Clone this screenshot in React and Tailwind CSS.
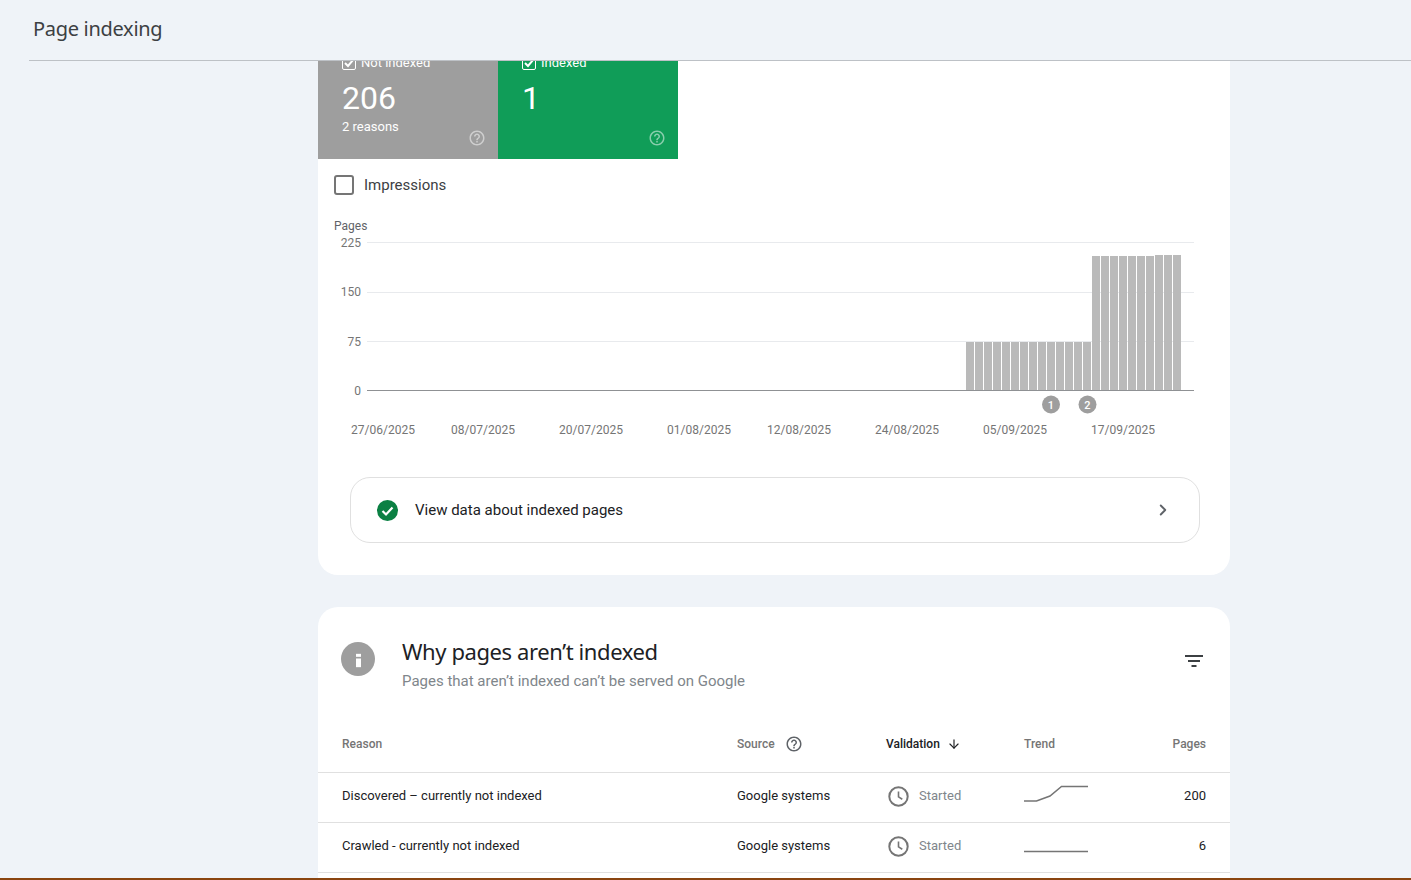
import { ChevronRight, ArrowDown } from 'lucide-react';

const yLabels = [
  { y: 243, line: 242.5, label: '225' },
  { y: 292, line: 292.5, label: '150' },
  { y: 342, line: 341.5, label: '75' },
  { y: 391, line: 390.5, label: '0' },
];

const xLabels = [
  { x: 383, label: '27/06/2025' },
  { x: 483, label: '08/07/2025' },
  { x: 591, label: '20/07/2025' },
  { x: 699, label: '01/08/2025' },
  { x: 799, label: '12/08/2025' },
  { x: 907, label: '24/08/2025' },
  { x: 1015, label: '05/09/2025' },
  { x: 1123, label: '17/09/2025' },
];

const bars = [
  ...Array(14).fill(342),
  ...Array(7).fill(256),
  ...Array(3).fill(255),
];

const rows = [
  { reason: 'Discovered – currently not indexed', pages: '200', trend: '0,26 12.5,26 26,21 37.5,11.5 64,11.5' },
  { reason: 'Crawled - currently not indexed', pages: '6', trend: '0,26.5 64,26.5' },
];

function HelpIcon({ className }) {
  return (
    <svg viewBox="0 0 24 24" className={className} fill="currentColor">
      <path d="M11 18h2v-2h-2v2zm1-16C6.48 2 2 6.48 2 12s4.48 10 10 10 10-4.48 10-10S17.52 2 12 2zm0 18c-4.41 0-8-3.59-8-8s3.59-8 8-8 8 3.59 8 8-3.59 8-8 8zm0-14c-2.21 0-4 1.79-4 4h2c0-1.1.9-2 2-2s2 .9 2 2c0 2-3 1.75-3 5h2c0-2.25 3-2.5 3-5 0-2.21-1.79-4-4-4z" />
    </svg>
  );
}

function ClockIcon() {
  return (
    <svg viewBox="0 0 21 21" className="w-[21px] h-[21px] text-[#757575]" fill="none" stroke="currentColor">
      <circle cx="10.5" cy="10.5" r="9.2" strokeWidth="2" />
      <path d="M10.5 5.5v5.4l3.8 2.4" strokeWidth="1.6" />
    </svg>
  );
}

function Tile({ label, value, sub, color }) {
  return (
    <div className={`w-[180px] h-[113px] relative pl-6 text-white ${color}`}>
      <div className="flex items-center gap-[5px] pt-[9px] h-[24px] text-[13px] leading-4">
        <svg viewBox="0 0 14 14" className="w-[14px] h-[14px]" fill="none" stroke="currentColor">
          <rect x="0.5" y="0.5" width="13" height="13" rx="1.5" />
          <path d="M3 7l3 3 5-6" strokeWidth="2" />
        </svg>
        <span>{label}</span>
      </div>
      <div className="text-[32px] leading-10 mt-2">{value}</div>
      <div className="text-[13px] leading-4 mt-[1px]">{sub}</div>
      <HelpIcon className="absolute right-[12px] bottom-[12px] w-[18px] h-[18px] opacity-50" />
    </div>
  );
}

function Chart() {
  return (
    <svg viewBox="318 210 912 240" className="block w-[912px] h-[240px] mt-[15px]">
      {yLabels.map((t) => (
        <g key={t.label}>
          <line
            x1="367"
            x2="1194"
            y1={t.line}
            y2={t.line}
            stroke={t.label === '0' ? '#8f9194' : '#e8eaed'}
          />
          <text x="361" y={t.y + 4} textAnchor="end" fontSize="12" fill="#757575">{t.label}</text>
        </g>
      ))}
      <text x="334" y="230" fontSize="12" fill="#5f6368">Pages</text>
      {bars.map((top, i) => (
        <rect key={i} x={Math.round(965.5 + i * 9.03)} y={top} width="8" height={390 - top} fill="#bababa" />
      ))}
      <circle cx="1051" cy="404.5" r="9" fill="#9e9e9e" />
      <text x="1051" y="408.5" textAnchor="middle" fontSize="11" fontWeight="500" fill="#fff">1</text>
      <circle cx="1087.5" cy="404.5" r="9" fill="#9e9e9e" />
      <text x="1087.5" y="408.5" textAnchor="middle" fontSize="11" fontWeight="500" fill="#fff">2</text>
      {xLabels.map((t) => (
        <text key={t.label} x={t.x} y="434" textAnchor="middle" fontSize="12" fill="#757575">{t.label}</text>
      ))}
    </svg>
  );
}

export default function App() {
  return (
    <div className="h-[880px] flex flex-col overflow-hidden bg-[#eff3f8] border-b-2 border-[#8a4510] font-['Roboto',sans-serif]">
      <div className="h-[61px] shrink-0 ml-[29px] pl-1 border-b border-[#bdc1c6] flex items-center">
        <h1 className="text-[20px] tracking-[-0.3px] font-['Noto_Sans',sans-serif] text-[#3c4043] pb-[3px]">Page indexing</h1>
      </div>

      <div className="flex-1 overflow-hidden pl-[318px]">
        <div className="w-[912px] -mt-[15px] bg-white rounded-b-[20px] pb-8">
          <div className="flex">
            <Tile label="Not indexed" value="206" sub="2 reasons" color="bg-[#9e9e9e]" />
            <Tile label="Indexed" value="1" color="bg-[#109d58]" />
          </div>

          <div className="flex items-center gap-[10px] pl-4 mt-4 h-5">
            <div className="w-5 h-5 rounded-[3px] border-2 border-[#757575]" />
            <span className="text-[15px] text-[#3c4043]">Impressions</span>
          </div>

          <Chart />

          <div className="ml-8 mr-[30px] mt-[27px] h-[66px] rounded-[20px] border border-[#e0e0e0] flex items-center pl-[26px] pr-[27px]">
            <svg viewBox="0 0 21 21" className="w-[21px] h-[21px]">
              <circle cx="10.5" cy="10.5" r="10.5" fill="#0b8043" />
              <path d="M5.5 11l3.5 3.5 6.5-7" fill="none" stroke="#fff" strokeWidth="2.2" />
            </svg>
            <span className="ml-[17px] text-[15px] text-[#202124]">View data about indexed pages</span>
            <ChevronRight className="ml-auto w-[18px] h-[18px] text-[#5f6368]" strokeWidth={2.5} />
          </div>
        </div>

        <div className="w-[912px] mt-8 bg-white rounded-t-[20px] pb-10">
          <div className="flex pt-[30px] pl-[23px] pr-[27px]">
            <div className="w-[34px] h-[34px] mt-[5px] rounded-full bg-[#9e9e9e] flex items-center justify-center">
              <svg viewBox="0 0 6 16" className="w-[5px] h-[15px] mt-[2px]" fill="#fff">
                <rect x="0" y="0" width="6" height="3.6" />
                <rect x="0" y="5.6" width="6" height="10.4" />
              </svg>
            </div>
            <div className="ml-[27px]">
              <h2 className="text-[22px] leading-7 tracking-[-0.4px] text-[#202124] font-['Noto_Sans',sans-serif]">Why pages aren’t indexed</h2>
              <p className="text-[15px] leading-5 mt-[6px] text-[#80868b]">Pages that aren’t indexed can’t be served on Google</p>
            </div>
            <svg viewBox="0 0 18 12" className="ml-auto w-[18px] h-[12px] mt-[18px]" fill="#3c4043">
              <rect x="0" y="0" width="18" height="2" />
              <rect x="3" y="5" width="12" height="2" />
              <rect x="6.5" y="10" width="5" height="2" />
            </svg>
          </div>

          <div className="mt-[25px] h-[57px] border-b border-[#e0e0e0] grid grid-cols-[395px_149px_138px_1fr] items-center pl-6 pr-6 text-[12px] font-medium text-[#757575]">
            <div>Reason</div>
            <div className="flex items-center gap-[10px]">
              Source
              <HelpIcon className="w-[18px] h-[18px] text-[#5f6368]" />
            </div>
            <div className="flex items-center gap-[7px] text-[#202124]">
              Validation
              <ArrowDown className="w-[14px] h-[14px]" strokeWidth={2} />
            </div>
            <div className="flex items-center justify-between">
              <span>Trend</span>
              <span>Pages</span>
            </div>
          </div>

          {rows.map((row) => (
            <div
              key={row.reason}
              className="h-[50px] pb-1 border-b border-[#e0e0e0] grid grid-cols-[395px_149px_138px_1fr] items-center pl-6 pr-6 text-[13px] text-[#202124]"
            >
              <div>{row.reason}</div>
              <div>Google systems</div>
              <div className="flex items-center gap-[10px] pl-[2px] text-[#80868b]">
                <ClockIcon />
                Started
              </div>
              <div className="flex items-center justify-between">
                <svg viewBox="0 0 64 44" className="w-16 h-[44px] mt-[2px]" fill="none" stroke="#757575" strokeWidth="1.5">
                  <polyline points={row.trend} />
                </svg>
                <span>{row.pages}</span>
              </div>
            </div>
          ))}
        </div>
      </div>
    </div>
  );
}
